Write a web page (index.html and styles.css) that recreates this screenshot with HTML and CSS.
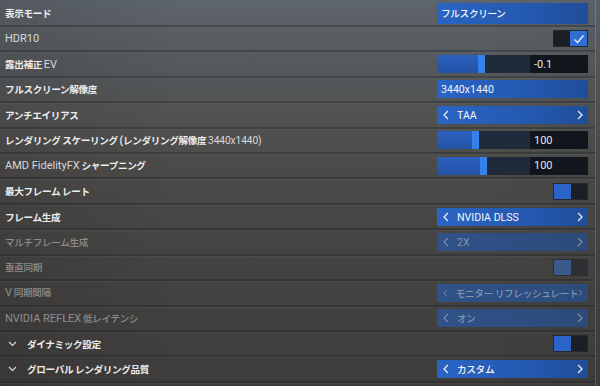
FILE: index.html
```html
<!DOCTYPE html>
<html lang="ja">
<head>
<meta charset="utf-8">
<link rel="stylesheet" href="styles.css">
</head>
<body>
<div class="list">
  <div class="row first">
    <span class="label b">表示モード</span>
    <div class="drop active plain"><span class="val">フルスクリーン</span></div>
  </div>
  <div class="row">
    <span class="label lt"><span class="n">HDR10</span></span>
    <div class="check on"><span class="half"></span><span class="knob"><svg width="12" height="10" viewBox="0 0 12 10"><polyline points="1.5,5.5 4.5,8.5 10.5,1.5" fill="none" stroke="#e8f0ff" stroke-width="1.4"/></svg></span></div>
  </div>
  <div class="row">
    <span class="label b">露出補正 <span class="n lt">EV</span></span>
    <div class="slider"><div class="track"><div class="fill" style="width:41px"></div><div class="thumb"></div></div><div class="num">-0.1</div></div>
  </div>
  <div class="row">
    <span class="label b">フルスクリーン解像度</span>
    <div class="drop active plain"><span class="val"><span class="n">3440x1440</span></span></div>
  </div>
  <div class="row">
    <span class="label b">アンチエイリアス</span>
    <div class="drop active"><svg class="chev" width="6" height="10" viewBox="0 0 6 10"><polyline points="5,1 1,5 5,9" fill="none" stroke="#e6ecf6" stroke-width="1.3"/></svg><span class="val"><span class="n">TAA</span></span><svg class="chev" width="6" height="10" viewBox="0 0 6 10"><polyline points="1,1 5,5 1,9" fill="none" stroke="#e6ecf6" stroke-width="1.3"/></svg></div>
  </div>
  <div class="row">
    <span class="label b">レンダリング スケーリング <span class="n sm">(</span>レンダリング解像度 <span class="n sm lt">3440x1440)</span></span>
    <div class="slider"><div class="track"><div class="fill" style="width:35px"></div><div class="thumb"></div></div><div class="num">100</div></div>
  </div>
  <div class="row">
    <span class="label b"><span class="n lt">AMD FidelityFX</span> シャープニング</span>
    <div class="slider"><div class="track"><div class="fill" style="width:43px"></div><div class="thumb"></div></div><div class="num">100</div></div>
  </div>
  <div class="row">
    <span class="label b">最大フレーム レート</span>
    <div class="check"><span class="knob"></span><span class="half"></span></div>
  </div>
  <div class="row">
    <span class="label b">フレーム生成</span>
    <div class="drop active"><svg class="chev" width="6" height="10" viewBox="0 0 6 10"><polyline points="5,1 1,5 5,9" fill="none" stroke="#e6ecf6" stroke-width="1.3"/></svg><span class="val"><span class="n">NVIDIA DLSS</span></span><svg class="chev" width="6" height="10" viewBox="0 0 6 10"><polyline points="1,1 5,5 1,9" fill="none" stroke="#e6ecf6" stroke-width="1.3"/></svg></div>
  </div>
  <div class="row">
    <span class="label dis">マルチフレーム生成</span>
    <div class="drop disabled"><svg class="chev" width="6" height="10" viewBox="0 0 6 10"><polyline points="5,1 1,5 5,9" fill="none" stroke="#7f8ea6" stroke-width="1.1"/></svg><span class="val"><span class="n">2X</span></span><svg class="chev" width="6" height="10" viewBox="0 0 6 10"><polyline points="1,1 5,5 1,9" fill="none" stroke="#7f8ea6" stroke-width="1.1"/></svg></div>
  </div>
  <div class="row">
    <span class="label dis">垂直同期</span>
    <div class="check disabled"><span class="knob"></span><span class="half"></span></div>
  </div>
  <div class="row">
    <span class="label dis"><span class="n">V</span> 同期間隔</span>
    <div class="drop disabled"><svg class="chev" width="6" height="10" viewBox="0 0 6 10"><polyline points="5,1 1,5 5,9" fill="none" stroke="#7f8ea6" stroke-width="1.1"/></svg><span class="val">モニター リフレッシュレート</span><svg class="chev" width="6" height="10" viewBox="0 0 6 10"><polyline points="1,1 5,5 1,9" fill="none" stroke="#7f8ea6" stroke-width="1.1"/></svg></div>
  </div>
  <div class="row">
    <span class="label dis"><span class="n">NVIDIA REFLEX</span> 低レイテンシ</span>
    <div class="drop disabled"><svg class="chev" width="6" height="10" viewBox="0 0 6 10"><polyline points="5,1 1,5 5,9" fill="none" stroke="#7f8ea6" stroke-width="1.1"/></svg><span class="val">オン</span><svg class="chev" width="6" height="10" viewBox="0 0 6 10"><polyline points="1,1 5,5 1,9" fill="none" stroke="#7f8ea6" stroke-width="1.1"/></svg></div>
  </div>
  <div class="row">
    <span class="label b exp"><svg class="down" width="9" height="6" viewBox="0 0 9 6"><polyline points="1,1 4.5,4.5 8,1" fill="none" stroke="#d8dadc" stroke-width="1.2"/></svg>ダイナミック設定</span>
    <div class="check"><span class="knob"></span><span class="half"></span></div>
  </div>
  <div class="row">
    <span class="label b exp"><svg class="down" width="9" height="6" viewBox="0 0 9 6"><polyline points="1,1 4.5,4.5 8,1" fill="none" stroke="#d8dadc" stroke-width="1.2"/></svg>グローバル レンダリング品質</span>
    <div class="drop active"><svg class="chev" width="6" height="10" viewBox="0 0 6 10"><polyline points="5,1 1,5 5,9" fill="none" stroke="#e6ecf6" stroke-width="1.3"/></svg><span class="val">カスタム</span><svg class="chev" width="6" height="10" viewBox="0 0 6 10"><polyline points="1,1 5,5 1,9" fill="none" stroke="#e6ecf6" stroke-width="1.3"/></svg></div>
  </div>
</div>
</body>
</html>
```

FILE: styles.css
```css
html, body {
  margin: 0;
  padding: 0;
  width: 600px;
  height: 386px;
  overflow: hidden;
}
body {
  background:
    linear-gradient(90deg, rgba(0,0,0,0.10) 0%, rgba(0,0,0,0) 30%, rgba(0,0,0,0) 80%, rgba(0,0,0,0.04) 100%),
    linear-gradient(180deg, #5d646b 0%, #545759 20%, #4b4a48 45%, #454341 70%, #3f3d3b 100%);
  font-family: "Noto Sans CJK JP", sans-serif;
  color: #e6e7e8;
}
.list {
  width: 596px;
  height: 386px;
  border-right: 1px solid rgba(200,205,210,0.22);
  padding-top: 1.5px;
  box-sizing: border-box;
}
.row {
  height: 25.43px;
  box-sizing: border-box;
  display: flex;
  align-items: center;
  justify-content: space-between;
  padding: 0 7px 0 5px;
  border-bottom: 2px solid rgba(30,32,36,0.35);
  box-shadow: 0 1px 0 rgba(255,255,255,0.04);
}
.label {
  display: block;
  font-size: 9.6px;
  line-height: 14px;
  white-space: nowrap;
  letter-spacing: -0.35px;
}
.n {
  font-family: Roboto, "Noto Sans CJK JP", sans-serif;
  font-size: 11px;
  letter-spacing: 0;
}
.n.sm { font-size: 10.2px; letter-spacing: -0.1px; }
.label.b { font-weight: 700; color: #eceded; }
.lt { font-weight: 400; color: #d6d8da; }
.label .lt { font-weight: 400; }
.label.dis { color: #8d8d8d; font-weight: 500; }
.label.dis .n { font-weight: 400; }
.label.exp { padding-left: 3px; }
.down { margin-right: 10px; vertical-align: 1px; }

.drop {
  width: 151px;
  height: 18px;
  box-sizing: border-box;
  display: flex;
  align-items: center;
  padding: 0 5px 0 6px;
  font-size: 9.6px;
  font-weight: 500;
  letter-spacing: -0.3px;
  white-space: nowrap;
}
.drop .n { font-size: 10.6px; font-weight: 400; }
.drop.plain { padding-left: 4px; }
.first .drop { height: 21px; }
.drop.active {
  background: linear-gradient(90deg, #2a64c4 0%, #2459b0 60%, #1f4d98 100%);
  color: #f2f5fa;
}
.drop.disabled {
  background: linear-gradient(90deg, #2f5288 0%, #2c4b7b 100%);
  color: #8494ad;
}
.drop .val { flex: 1; margin-left: 8px; }
.drop.plain .val { margin-left: 0; }

.check {
  width: 35px;
  height: 17px;
  box-sizing: border-box;
  border: 1px solid #24272c;
  background: #1b1e25;
  display: flex;
}
.check .half { flex: 1; }
.check .knob {
  width: 17px;
  background: #2b63c9;
  display: flex;
  align-items: center;
  justify-content: center;
}
.check.on .knob { background: #2f6fd6; }
.check.disabled { background: #2e3035; border-color: #2a2c30; }
.check.disabled .knob { background: #3a5a8c; }

.slider {
  width: 151px;
  height: 18px;
  display: flex;
}
.track {
  width: 93px;
  background: #1f2a3a;
  display: flex;
}
.fill {
  background: linear-gradient(180deg, #2a60bf 0%, #2453a6 100%);
}
.thumb {
  width: 7px;
  background: #3581ec;
}
.num {
  flex: 1;
  background: #11151c;
  font-family: Roboto, sans-serif;
  font-size: 11px;
  color: #e4e6ea;
  display: flex;
  align-items: center;
  padding-left: 4px;
}
```
